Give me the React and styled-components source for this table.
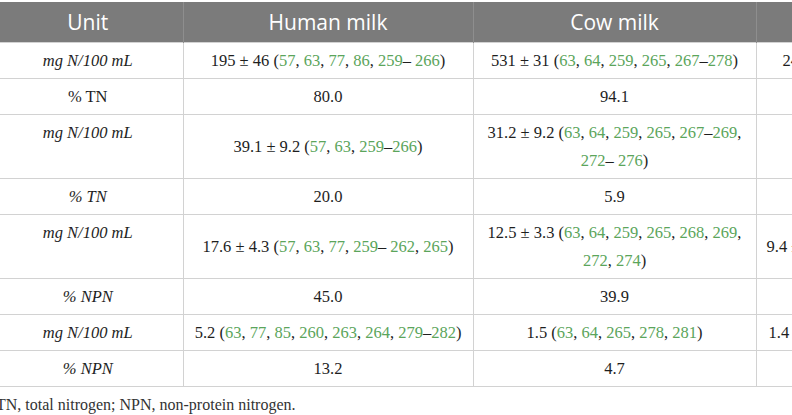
import React from "react"
import styled, { createGlobalStyle } from "styled-components"

const GlobalStyle = createGlobalStyle`
  html, body {
    margin: 0;
    padding: 0;
    background: #ffffff;
    overflow: hidden;
  }
`

const Page = styled.div`
  width: 792px;
  height: 415px;
  overflow: hidden;
  padding-top: 2px;
  box-sizing: border-box;
`

const Wrapper = styled.div`
  margin-left: -7px;
  width: 1063px;
`

const Table = styled.table`
  border-collapse: collapse;
  table-layout: fixed;
  width: 1063px;
  font-family: "Liberation Serif", "Times New Roman", serif;
  font-size: 16.5px;
  color: #1e1e1e;
`

const HeadCell = styled.th`
  background: #7b7b7b;
  color: #ffffff;
  font-family: "Open Sans", "Noto Sans", sans-serif;
  font-weight: 400;
  font-size: 21px;
  height: 40px;
  padding: 0;
  text-align: center;
  border-right: 1px solid #8e8e8e;
`

const Cell = styled.td`
  border: 1px solid #d2d2d2;
  border-left: ${(p) => (p.$first ? "none" : "1px solid #d2d2d2")};
  padding: 4px 10px 3px;
  line-height: 28px;
  text-align: center;
  vertical-align: ${(p) => (p.$first ? "top" : "middle")};
  font-style: ${(p) => (p.$italic ? "italic" : "normal")};
  white-space: nowrap;
`

const Ref = styled.span`
  color: #5ba55b;
`

const Footnote = styled.p`
  margin: 6px 0 0 3px;
  font-family: "Liberation Serif", "Times New Roman", serif;
  font-size: 16px;
  line-height: 24px;
  color: #333333;
  white-space: nowrap;
`

// a value followed by its citations; "lines" splits the citations over rows
const Cited = ({ value, lines }) => (
  <>
    {lines.map((refs, li) => (
      <React.Fragment key={li}>
        {li === 0 && `${value} (`}
        {refs.map((r, i) => (
          <React.Fragment key={i}>
            {r.map((part, j) =>
              typeof part === "string" ? part : <Ref key={j}>{part.n}</Ref>
            )}
            {i < refs.length - 1 ? ", " : ""}
          </React.Fragment>
        ))}
        {li < lines.length - 1 ? (
          <>
            ,<br />
          </>
        ) : (
          ")"
        )}
      </React.Fragment>
    ))}
  </>
)

const n = (v) => ({ n: v })
const one = (v) => [n(v)]
const range = (a, b, sep = "–") => [n(a), sep, n(b)]

const rows = [
  {
    unit: "mg N/100 mL",
    italic: true,
    human: <Cited value="195 ± 46" lines={[[one(57), one(63), one(77), one(86), range(259, 266, "– ")]]} />,
    cow: <Cited value="531 ± 31" lines={[[one(63), one(64), one(259), one(265), range(267, 278)]]} />,
    other: <Cited value="248 ± 52" lines={[[one(63), one(64), one(259), one(265), range(267, 278)]]} />,
  },
  { unit: "% TN", italic: false, human: "80.0", cow: "94.1", other: "93.6" },
  {
    unit: "mg N/100 mL",
    italic: true,
    human: <Cited value="39.1 ± 9.2" lines={[[one(57), one(63), range(259, 266)]]} />,
    cow: (
      <Cited
        value="31.2 ± 9.2"
        lines={[
          [one(63), one(64), one(259), one(265), range(267, 269)],
          [range(272, 276, "– ")],
        ]}
      />
    ),
    other: "",
  },
  { unit: "% TN", italic: true, human: "20.0", cow: "5.9", other: "" },
  {
    unit: "mg N/100 mL",
    italic: true,
    human: <Cited value="17.6 ± 4.3" lines={[[one(57), one(63), one(77), range(259, 262, "– "), one(265)]]} />,
    cow: (
      <Cited
        value="12.5 ± 3.3"
        lines={[
          [one(63), one(64), one(259), one(265), one(268), one(269)],
          [one(272), one(274)],
        ]}
      />
    ),
    other: <Cited value="9.4 ± 2.2" lines={[[one(63), one(64), one(259), one(265), one(268), one(269), one(274)]]} />,
  },
  { unit: "% NPN", italic: true, human: "45.0", cow: "39.9", other: "" },
  {
    unit: "mg N/100 mL",
    italic: true,
    human: <Cited value="5.2" lines={[[one(63), one(77), one(85), one(260), one(263), one(264), range(279, 282)]]} />,
    cow: <Cited value="1.5" lines={[[one(63), one(64), one(265), one(278), one(281)]]} />,
    other: <Cited value="1.4" lines={[[one(63), one(64), one(259), one(265), one(268), one(278), one(281), one(283)]]} />,
  },
  { unit: "% NPN", italic: true, human: "13.2", cow: "4.7", other: "" },
]

const App = () => {
  return (
    <Page>
      <GlobalStyle />
      <Wrapper>
        <Table>
          <colgroup>
            <col style={{ width: 190 }} />
            <col style={{ width: 290 }} />
            <col style={{ width: 283 }} />
            <col style={{ width: 300 }} />
          </colgroup>
          <thead>
            <tr>
              <HeadCell>Unit</HeadCell>
              <HeadCell>Human milk</HeadCell>
              <HeadCell>Cow milk</HeadCell>
              <HeadCell>Goat milk</HeadCell>
            </tr>
          </thead>
          <tbody>
            {rows.map((row, i) => (
              <tr key={i}>
                <Cell $first $italic={row.italic}>
                  {row.unit}
                </Cell>
                <Cell>{row.human}</Cell>
                <Cell>{row.cow}</Cell>
                <Cell>{row.other}</Cell>
              </tr>
            ))}
          </tbody>
        </Table>
        <Footnote>TN, total nitrogen; NPN, non-protein nitrogen.</Footnote>
      </Wrapper>
    </Page>
  )
}

export default App
